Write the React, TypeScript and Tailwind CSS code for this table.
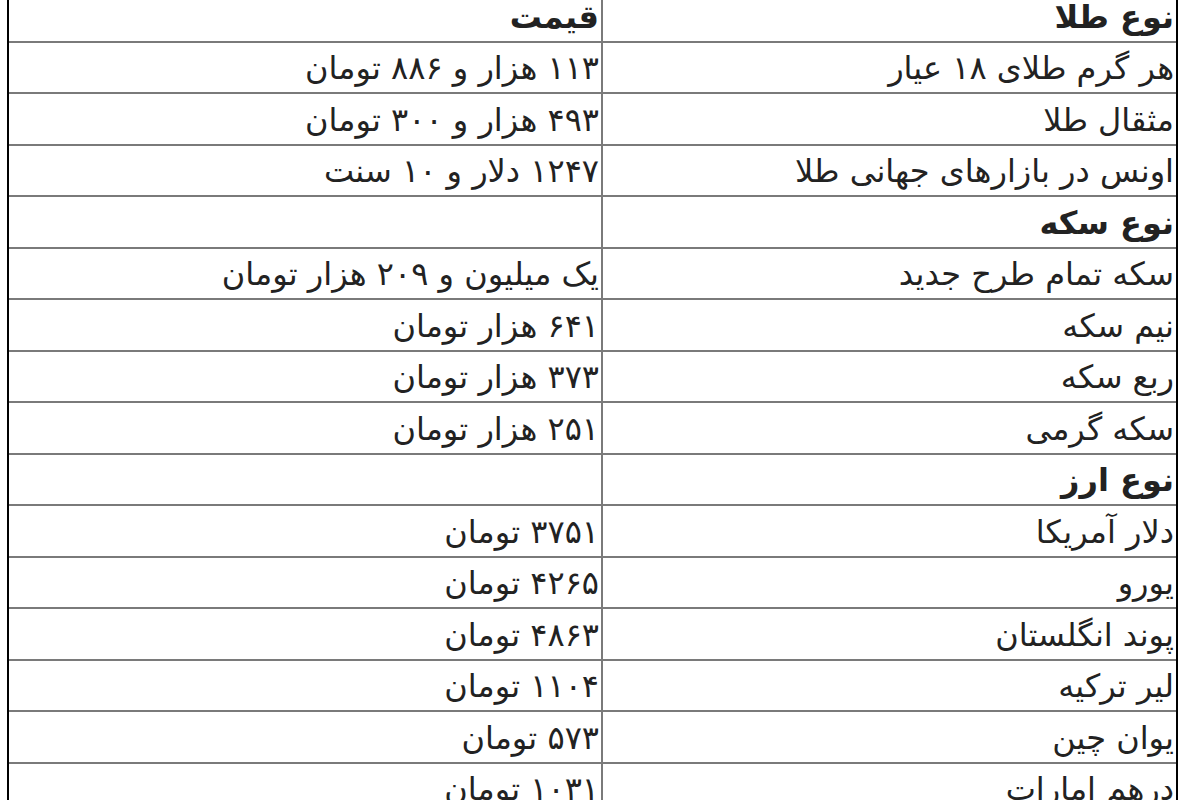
import React from "react";

type Row = { name: string; price: string; bold?: boolean };

const rows: Row[] = [
  { name: "نوع طلا", price: "قیمت", bold: true },
  { name: "هر گرم طلای ۱۸ عیار", price: "۱۱۳ هزار و ۸۸۶ تومان" },
  { name: "مثقال طلا", price: "۴۹۳ هزار و ۳۰۰ تومان" },
  { name: "اونس در بازارهای جهانی طلا", price: "۱۲۴۷ دلار و ۱۰ سنت" },
  { name: "نوع سکه", price: "", bold: true },
  { name: "سکه تمام طرح جدید", price: "یک میلیون و ۲۰۹ هزار تومان" },
  { name: "نیم سکه", price: "۶۴۱ هزار تومان" },
  { name: "ربع سکه", price: "۳۷۳ هزار تومان" },
  { name: "سکه گرمی", price: "۲۵۱ هزار تومان" },
  { name: "نوع ارز", price: "", bold: true },
  { name: "دلار آمریکا", price: "۳۷۵۱ تومان" },
  { name: "یورو", price: "۴۲۶۵ تومان" },
  { name: "پوند انگلستان", price: "۴۸۶۳ تومان" },
  { name: "لیر ترکیه", price: "۱۱۰۴ تومان" },
  { name: "یوان چین", price: "۵۷۳ تومان" },
  { name: "درهم امارات", price: "۱۰۳۱ تومان" },
];

export default function App() {
  return (
    <div className="w-[1200px] h-[800px] overflow-hidden bg-white">
      <div
        dir="rtl"
        className="ml-[7px] w-[1171px] border-x-2 border-black text-[#222222] text-[32px] leading-none"
        style={{ fontFamily: '"DejaVu Sans", sans-serif' }}
      >
        {rows.map((r, i) => {
          const first = i === 0;
          const rowCls = first ? "h-[42.5px]" : "h-[51.5px]";
          const pad = first ? "pb-[7px]" : "pt-[2px]";
          return (
            <div key={i} className={`flex ${rowCls} border-b-2 border-[#7a7a7a]`}>
              <div
                className={`w-[575px] shrink-0 border-l-2 border-[#7a7a7a] pr-[2px] ${pad} flex items-center whitespace-nowrap ${
                  r.bold ? "font-bold" : ""
                }`}
              >
                {r.name}
              </div>
              <div
                className={`flex-1 pr-[2px] ${pad} flex items-center whitespace-nowrap ${
                  r.bold ? "font-bold" : ""
                }`}
              >
                {r.price}
              </div>
            </div>
          );
        })}
      </div>
    </div>
  );
}
